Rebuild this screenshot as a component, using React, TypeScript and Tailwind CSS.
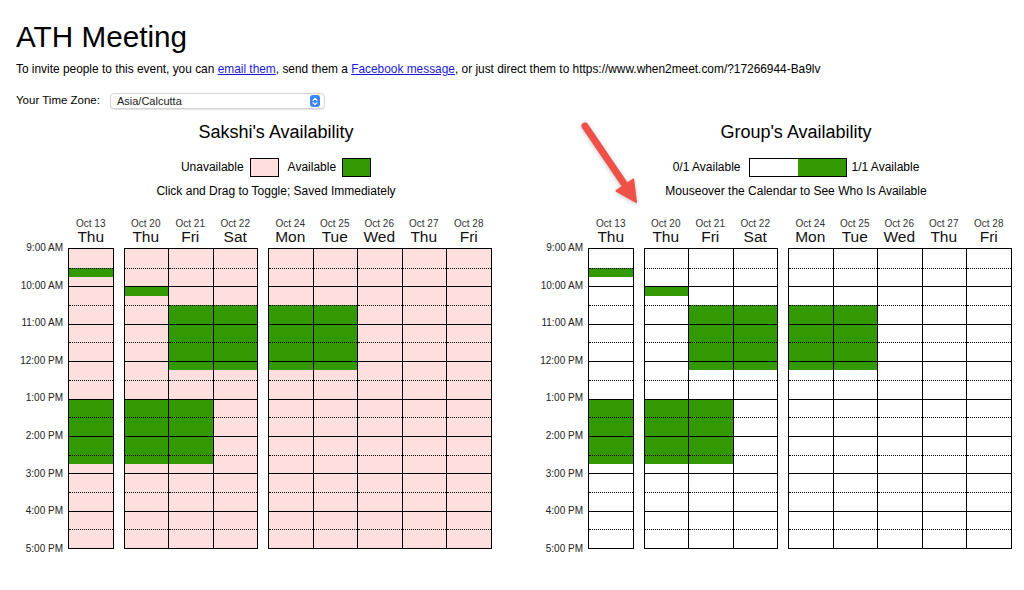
import React from "react";

type Day = { date: string; name: string; on: number[] };

const range = (a: number, b: number) => Array.from({ length: b - a + 1 }, (_, i) => a + i);

// slot index = 15 min steps from 9:00 AM
const blocks: Day[][] = [
  [{ date: "Oct 13", name: "Thu", on: [2, ...range(16, 22)] }],
  [
    { date: "Oct 20", name: "Thu", on: [4, ...range(16, 22)] },
    { date: "Oct 21", name: "Fri", on: [...range(6, 12), ...range(16, 22)] },
    { date: "Oct 22", name: "Sat", on: range(6, 12) },
  ],
  [
    { date: "Oct 24", name: "Mon", on: range(6, 12) },
    { date: "Oct 25", name: "Tue", on: range(6, 12) },
    { date: "Oct 26", name: "Wed", on: [] },
    { date: "Oct 27", name: "Thu", on: [] },
    { date: "Oct 28", name: "Fri", on: [] },
  ],
];

const hours = ["9:00 AM", "10:00 AM", "11:00 AM", "12:00 PM", "1:00 PM", "2:00 PM", "3:00 PM", "4:00 PM", "5:00 PM"];
const slots = range(0, 31);

const lineClass = (i: number) => {
  if (i === 0) return "";
  if (i % 4 === 0) return "border-t border-black";
  if (i % 2 === 0) return "border-t border-dotted border-black";
  return "";
};

const Grid: React.FC<{ offColor: string }> = ({ offColor }) => {
  return (
    <div className="flex items-start mt-[20px]">
      <div className="w-[52px] mt-[11.2px] flex flex-col">
        {hours.map((h) => (
          <div key={h} className="h-[37.6px] flex items-center justify-end pr-[5px] text-[10px] leading-[12px] text-[#222]">
            {h}
          </div>
        ))}
      </div>
      <div className="flex gap-[10px]">
        {blocks.map((block, bi) => (
          <div key={bi} className="flex">
            {block.map((day, di) => (
              <div key={day.date} className="flex flex-col">
                <div className="h-[30px] flex flex-col items-center text-[#111]">
                  <div className="h-[12px] leading-[12px] text-[10px] text-[#333]">{day.date}</div>
                  <div className="h-[14px] leading-[14px] text-[15.5px]">{day.name}</div>
                </div>
                <div
                  className={
                    "border-y border-l border-black flex flex-col " +
                    (di === block.length - 1 ? "border-r w-[45.5px]" : "w-[44.5px]")
                  }
                >
                  {slots.map((i) => (
                    <div
                      key={i}
                      className={"h-[9.35px] " + lineClass(i)}
                      style={{ backgroundColor: day.on.includes(i) ? "#339900" : offColor }}
                    />
                  ))}
                </div>
              </div>
            ))}
          </div>
        ))}
      </div>
    </div>
  );
};

const App: React.FC = () => {
  return (
    <div className="relative w-[1024px] h-[590px] overflow-hidden bg-white text-black font-['Liberation_Sans',Arial,sans-serif]">
      <div className="px-4">
        <h1 className="pt-[22px] text-[29.7px] leading-[29px] font-normal">ATH Meeting</h1>
        <div className="mt-[11px] h-[14px] leading-[14px] text-[11.9px] whitespace-nowrap">
          To invite people to this event, you can{" "}
          <a className="text-[#1a1ad6] underline">email them</a>, send them a{" "}
          <a className="text-[#1a1ad6] underline">Facebook message</a>, or just direct them to
          https://www.when2meet.com/?17266944-Ba9lv
        </div>
        <div className="mt-[16px] h-[18px] flex items-center text-[11.5px]">
          <span>Your Time Zone:</span>
          <div className="ml-[10px] w-[215px] h-[16px] flex items-center justify-between border border-[#d4d4d4] rounded-[4px] shadow-[0_1px_1px_rgba(0,0,0,0.12)] pl-[6px] pr-[4px] text-[11px] text-[#222]">
            <span>Asia/Calcutta</span>
            <span className="w-[10px] h-[12px] rounded-[3px] bg-[#3a86f5] flex items-center justify-center">
              <svg width="6" height="9" viewBox="0 0 6 9" fill="none" stroke="white" strokeWidth="1.2" strokeLinecap="round" strokeLinejoin="round">
                <path d="M1 3.3 L3 1.3 L5 3.3" />
                <path d="M1 5.7 L3 7.7 L5 5.7" />
              </svg>
            </span>
          </div>
        </div>
      </div>

      <div className="flex pl-4">
        {/* personal */}
        <div className="w-[520px] shrink-0 pt-[12px]">
          <div className="h-[20px] leading-[20px] text-[18px] text-center">Sakshi's Availability</div>
          <div className="mt-[15px] h-[20px] flex items-center justify-center text-[12px]">
            <span>Unavailable</span>
            <span className="ml-[6px] w-[29px] h-[19px] bg-[#ffdede] border border-black" />
            <span className="ml-[9px]">Available</span>
            <span className="ml-[6px] w-[29px] h-[19px] bg-[#339900] border border-black" />
          </div>
          <div className="mt-[7px] h-[14px] leading-[14px] text-[12px] text-center">
            Click and Drag to Toggle; Saved Immediately
          </div>
          <Grid offColor="#ffdede" />
        </div>

        {/* group */}
        <div className="w-[520px] shrink-0 pt-[12px]">
          <div className="h-[20px] leading-[20px] text-[18px] text-center">Group's Availability</div>
          <div className="mt-[15px] h-[20px] flex items-center justify-center text-[12px]">
            <span>0/1 Available</span>
            <span className="ml-[8px] w-[98px] h-[19px] flex border border-black">
              <span className="flex-1 bg-white" />
              <span className="flex-1 bg-[#339900]" />
            </span>
            <span className="ml-[5px]">1/1 Available</span>
          </div>
          <div className="mt-[7px] h-[14px] leading-[14px] text-[12px] text-center">
            Mouseover the Calendar to See Who Is Available
          </div>
          <Grid offColor="#ffffff" />
        </div>
      </div>

      {/* annotation arrow */}
      <svg
        className="absolute left-[570px] top-[110px] drop-shadow-[0_1px_2px_rgba(0,0,0,0.25)]"
        width="80"
        height="100"
        viewBox="0 0 80 100"
      >
        <line x1="15" y1="16" x2="57" y2="78" stroke="#ef5148" strokeWidth="7" strokeLinecap="round" />
        <path d="M66 92 L63.2 69.6 L46.6 80.8 Z" fill="#ef5148" stroke="#ef5148" strokeWidth="2" strokeLinejoin="round" />
      </svg>
    </div>
  );
};

export default App;
